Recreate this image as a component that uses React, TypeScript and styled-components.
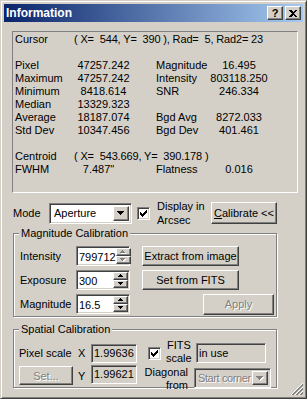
import React from 'react'
import type { FC } from 'react'
import styled, { createGlobalStyle, css } from 'styled-components'

const FACE = '#D4D0C8'
const SHADOW = '#808080'
const DARK = '#404040'

const GlobalStyle = createGlobalStyle`
  html, body {
    margin: 0;
    padding: 0;
    background: ${FACE};
  }
  body {
    font-family: "Liberation Sans", Arial, sans-serif;
    font-size: 11px;
    color: #000;
  }
`

const raised = css`
  box-sizing: border-box;
  border: 1px solid;
  border-color: #fff ${DARK} ${DARK} #fff;
  box-shadow: inset -1px -1px ${SHADOW};
  background: ${FACE};
`

const sunken = css`
  box-sizing: border-box;
  border: 1px solid;
  border-color: ${SHADOW} #fff #fff ${SHADOW};
  box-shadow: inset 1px 1px ${DARK}, inset -1px -1px ${FACE};
`

const disabledText = css`
  color: ${SHADOW};
  text-shadow: 1px 1px 0 #fff;
`

const Window = styled.div`
  position: relative;
  box-sizing: border-box;
  width: 307px;
  height: 399px;
  padding: 3px;
  background: ${FACE};
  border: 1px solid;
  border-color: ${FACE} ${DARK} ${DARK} ${FACE};
  box-shadow: inset 1px 1px #fff, inset -1px -1px ${SHADOW};
  display: flex;
  flex-direction: column;
`

const TitleBar = styled.div`
  height: 18px;
  flex: none;
  display: flex;
  align-items: center;
  padding: 0 2px 0 2px;
  background: linear-gradient(to right, #0a246a, #a6caf0);
`

const TitleText = styled.div`
  flex: 1;
  color: #fff;
  font-weight: bold;
  font-size: 12px;
  line-height: 18px;
`

const CaptionButton = styled.div`
  ${raised};
  width: 16px;
  height: 14px;
  margin-left: 2px;
  display: flex;
  align-items: center;
  justify-content: center;
  font-weight: bold;
  font-size: 11px;
  line-height: 12px;
`

const Body = styled.div`
  flex: 1;
  display: flex;
  flex-direction: column;
  padding: 9px 0 0 8px;
`

const InfoPanel = styled.div`
  box-sizing: border-box;
  width: 286px;
  height: 162px;
  padding: 1px 0 0 2px;
  border: 1px solid;
  border-color: ${SHADOW} #fff #fff ${SHADOW};
`

const InfoGrid = styled.div`
  display: grid;
  grid-template-columns: 62px 53px 26px 53px 60px;
  grid-auto-rows: 13px;
  line-height: 13px;
  white-space: nowrap;
`

const InfoValue = styled.div<{ $shift?: number }>`
  text-align: center;
  padding-right: ${p => p.$shift ?? 0}px;
`

const WideRow = styled.div`
  grid-column: 1 / -1;
  display: flex;
`

const WideLabel = styled.div`
  width: 59px;
  flex: none;
`

const Pre = styled.div`
  white-space: pre;
  letter-spacing: -0.15px;
`

const ModeRow = styled.div`
  display: flex;
  align-items: center;
  height: 22px;
  margin: 9px 0 0 1px;
`

const ModeLabel = styled.div`
  width: 36px;
  flex: none;
`

const Combo = styled.div<{ $w: number; $h: number; $disabled?: boolean }>`
  ${sunken};
  width: ${p => p.$w}px;
  height: ${p => p.$h}px;
  flex: none;
  display: flex;
  padding: 2px;
  background: ${p => (p.$disabled ? FACE : '#fff')};
`

const ComboText = styled.div<{ $disabled?: boolean }>`
  flex: 1;
  overflow: hidden;
  white-space: nowrap;
  padding-left: 2px;
  display: flex;
  align-items: center;
  ${p => p.$disabled && disabledText};
  ${p => p.$disabled && 'letter-spacing: -0.4px; padding-left: 1px;'};
`

const DropButton = styled.div`
  ${raised};
  width: 16px;
  flex: none;
  display: flex;
  align-items: center;
  justify-content: center;
`

const CheckBox = styled.div<{ $ml?: number }>`
  ${sunken};
  width: 13px;
  height: 13px;
  flex: none;
  margin-left: ${p => p.$ml ?? 0}px;
  background: #fff;
  display: flex;
  align-items: center;
  justify-content: center;
`

const CheckText = styled.div<{ $ml: number; $w?: number; $lh?: number; $mt?: number }>`
  margin-left: ${p => p.$ml}px;
  margin-top: ${p => p.$mt ?? 0}px;
  line-height: ${p => p.$lh ?? 14}px;
  width: ${p => (p.$w ? `${p.$w}px` : 'auto')};
  text-align: ${p => (p.$w ? 'left' : 'center')};
  flex: none;
`

const PushButton = styled.div<{ $w: number; $h: number; $disabled?: boolean }>`
  ${raised};
  width: ${p => p.$w}px;
  height: ${p => p.$h}px;
  flex: none;
  display: flex;
  align-items: center;
  justify-content: center;
  white-space: nowrap;
  ${p => p.$disabled && disabledText};
`

const GroupBox = styled.div<{ $h: number; $mt: number }>`
  box-sizing: border-box;
  width: 264px;
  height: ${p => p.$h}px;
  margin: ${p => p.$mt}px 0 0 1px;
  border: 1px solid ${SHADOW};
  box-shadow: inset 1px 1px #fff, 1px 1px #fff;
  display: flex;
  flex-direction: column;
`

const GroupTitle = styled.div`
  align-self: flex-start;
  margin: -7px 0 0 5px;
  padding: 0 2px;
  line-height: 13px;
  background: ${FACE};
`

const MagRows = styled.div`
  display: flex;
  flex-direction: column;
  gap: 4px;
  padding: 6px 2px 0 6px;
`

const MagRow = styled.div`
  display: flex;
  align-items: center;
  height: 20px;
`

const FieldLabel = styled.div`
  width: 56px;
  flex: none;
`

const SpinBox = styled.div`
  ${sunken};
  width: 54px;
  height: 20px;
  flex: none;
  display: flex;
  padding: 1px;
  background: #fff;
`

const SpinText = styled.div`
  flex: 1;
  padding-left: 1px;
  line-height: 18px;
  white-space: nowrap;
`

const Spinner = styled.div`
  width: 15px;
  flex: none;
  display: flex;
  flex-direction: column;
`

const SpinButton = styled.div`
  ${raised};
  flex: 1;
  display: flex;
  align-items: center;
  justify-content: center;
`

const ButtonSlot = styled.div<{ $ml?: number }>`
  margin-left: ${p => (p.$ml !== undefined ? `${p.$ml}px` : 'auto')};
`

const SpatialGrid = styled.div`
  display: grid;
  grid-template-columns: 56px 16px 46px 57px 77px;
  grid-template-rows: 22px 24px;
  padding: 6px 0 0 5px;
`

const Cell = styled.div<{ $align?: string; $mt?: number; $pl?: number }>`
  align-self: ${p => p.$align ?? 'center'};
  margin-top: ${p => p.$mt ?? 0}px;
  padding-left: ${p => p.$pl ?? 0}px;
`

const ReadField = styled.div<{ $w: number; $h: number; $ml?: number }>`
  ${sunken};
  width: ${p => p.$w}px;
  height: ${p => p.$h}px;
  margin-left: ${p => p.$ml ?? 0}px;
  padding-left: 2px;
  line-height: ${p => p.$h - 2}px;
  white-space: nowrap;
`

const CheckCell = styled.div`
  display: flex;
  align-items: center;
  padding-left: 11px;
`

const DiagonalLabel = styled.div`
  align-self: start;
  margin-top: 2px;
  text-align: right;
  padding-right: 6px;
  line-height: 13px;
`

const Grip = styled.svg`
  position: absolute;
  right: 3px;
  bottom: 3px;
`

const ArrowSvg = styled.svg`
  display: block;
`

const Arrow: FC<{ size: number; up?: boolean; disabled?: boolean }> = ({ size, up, disabled }) => {
  const rows = (size + 1) / 2
  const rects = Array.from({ length: rows }, (_, i) => ({
    x: i,
    y: up ? rows - 1 - i : i,
    w: size - 2 * i,
  }))
  return (
    <ArrowSvg width={size + 1} height={rows + 1} shapeRendering="crispEdges">
      {disabled &&
        rects.map(r => <rect key={`s${r.y}`} x={r.x + 1} y={r.y + 1} width={r.w} height={1} fill="#fff" />)}
      {rects.map(r => (
        <rect key={r.y} x={r.x} y={r.y} width={r.w} height={1} fill={disabled ? SHADOW : '#000'} />
      ))}
    </ArrowSvg>
  )
}

const Check: FC = () => (
  <svg width="7" height="7" shapeRendering="crispEdges">
    <path d="M0 2h1v1h1v1h1v-1h1v-1h1v-1h1v-1h1v3h-1v1h-1v1h-1v1h-1v1h-1v-1h-1v-1h-1z" fill="#000" />
  </svg>
)

const Spin: FC<{ disabled?: boolean }> = ({ disabled }) => (
  <Spinner>
    <SpinButton>
      <Arrow size={5} up disabled={disabled} />
    </SpinButton>
    <SpinButton>
      <Arrow size={5} disabled={disabled} />
    </SpinButton>
  </Spinner>
)

type Stat = [string, string, string, string, number?]

const stats: Stat[] = [
  ['Pixel', '47257.242', 'Magnitude', '16.495'],
  ['Maximum', '47257.242', 'Intensity', '803118.250'],
  ['Minimum', '8418.614', 'SNR', '246.334'],
  ['Median', '13329.323', '', ''],
  ['Average', '18187.074', 'Bgd Avg', '8272.033'],
  ['Std Dev', '10347.456', 'Bgd Dev', '401.461'],
]

const StatRow: FC<{ row: Stat }> = ({ row }) => (
  <>
    <div>{row[0]}</div>
    <InfoValue $shift={row[4]}>{row[1]}</InfoValue>
    <div />
    <div>{row[2]}</div>
    <InfoValue>{row[3]}</InfoValue>
  </>
)

const App: FC = () => {
  return (
    <Window>
      <GlobalStyle />
      <TitleBar>
        <TitleText>Information</TitleText>
        <CaptionButton>?</CaptionButton>
        <CaptionButton>
          <svg width="8" height="7" shapeRendering="crispEdges">
            <path d="M0 0h2l2 2l2-2h2l-3 3.5l3 3.5h-2l-2-2l-2 2h-2l3-3.5z" fill="#000" />
          </svg>
        </CaptionButton>
      </TitleBar>
      <Body>
        <InfoPanel>
          <InfoGrid>
            <WideRow>
              <WideLabel>Cursor</WideLabel>
              <Pre>{'( X=  544, Y=  390 ), Rad=  5, Rad2= 23'}</Pre>
            </WideRow>
            <WideRow />
            {stats.map(r => (
              <StatRow key={r[0]} row={r} />
            ))}
            <WideRow />
            <WideRow>
              <WideLabel>Centroid</WideLabel>
              <Pre>{'( X=  543.669, Y=  390.178 )'}</Pre>
            </WideRow>
            <StatRow row={['FWHM', '7.487"', 'Flatness', '0.016', 10]} />
          </InfoGrid>
        </InfoPanel>

        <ModeRow>
          <ModeLabel>Mode</ModeLabel>
          <Combo $w={83} $h={21}>
            <ComboText>Aperture</ComboText>
            <DropButton>
              <Arrow size={7} />
            </DropButton>
          </Combo>
          <CheckBox $ml={5}>
            <Check />
          </CheckBox>
          <CheckText $ml={7} $w={54}>
            Display in
            <br />
            Arcsec
          </CheckText>
          <PushButton $w={66} $h={22}>
            <u>C</u>alibrate &lt;&lt;
          </PushButton>
        </ModeRow>

        <GroupBox $h={84} $mt={9}>
          <GroupTitle>Magnitude Calibration</GroupTitle>
          <MagRows>
            <MagRow>
              <FieldLabel>Intensity</FieldLabel>
              <SpinBox>
                <SpinText>799712</SpinText>
                <Spin disabled />
              </SpinBox>
              <ButtonSlot $ml={12}>
                <PushButton $w={97} $h={20}>Extract from image</PushButton>
              </ButtonSlot>
            </MagRow>
            <MagRow>
              <FieldLabel>Exposure</FieldLabel>
              <SpinBox>
                <SpinText>300</SpinText>
                <Spin />
              </SpinBox>
              <ButtonSlot $ml={12}>
                <PushButton $w={97} $h={20}>Set from FITS</PushButton>
              </ButtonSlot>
            </MagRow>
            <MagRow>
              <FieldLabel>Magnitude</FieldLabel>
              <SpinBox>
                <SpinText>16.5</SpinText>
                <Spin />
              </SpinBox>
              <ButtonSlot>
                <PushButton $w={71} $h={21} $disabled>
                  Apply
                </PushButton>
              </ButtonSlot>
            </MagRow>
          </MagRows>
        </GroupBox>

        <GroupBox $h={59} $mt={12}>
          <GroupTitle>Spatial Calibration</GroupTitle>
          <SpatialGrid>
            <Cell>Pixel scale</Cell>
            <Cell $pl={3}>X</Cell>
            <Cell>
              <ReadField $w={46} $h={19}>1.99636</ReadField>
            </Cell>
            <CheckCell>
              <CheckBox>
                <Check />
              </CheckBox>
              <CheckText $ml={5} $lh={13} $mt={-3}>
                FITS
                <br />
                scale
              </CheckText>
            </CheckCell>
            <Cell>
              <ReadField $w={70} $h={20} $ml={2}>
                in use
              </ReadField>
            </Cell>

            <Cell $align="start" $mt={2}>
              <PushButton $w={54} $h={19} $disabled>
                Set...
              </PushButton>
            </Cell>
            <Cell $pl={3}>Y</Cell>
            <Cell $align="start" $mt={1}>
              <ReadField $w={46} $h={19}>1.99621</ReadField>
            </Cell>
            <DiagonalLabel>
              Diagonal
              <br />
              from
            </DiagonalLabel>
            <Cell $align="end">
              <Combo $w={77} $h={20} $disabled>
                <ComboText $disabled>Start corner</ComboText>
                <DropButton>
                  <Arrow size={7} disabled />
                </DropButton>
              </Combo>
            </Cell>
          </SpatialGrid>
        </GroupBox>
      </Body>
      <Grip width="12" height="12" shapeRendering="crispEdges">
        {[0, 4, 8].map(o => (
          <g key={o}>
            <line x1={o} y1={12} x2={12} y2={o} stroke="#fff" strokeWidth={1} />
            <line x1={o + 1} y1={12} x2={12} y2={o + 1} stroke={SHADOW} strokeWidth={1} />
            <line x1={o + 2} y1={12} x2={12} y2={o + 2} stroke={SHADOW} strokeWidth={1} />
          </g>
        ))}
      </Grip>
    </Window>
  )
}

export default App
